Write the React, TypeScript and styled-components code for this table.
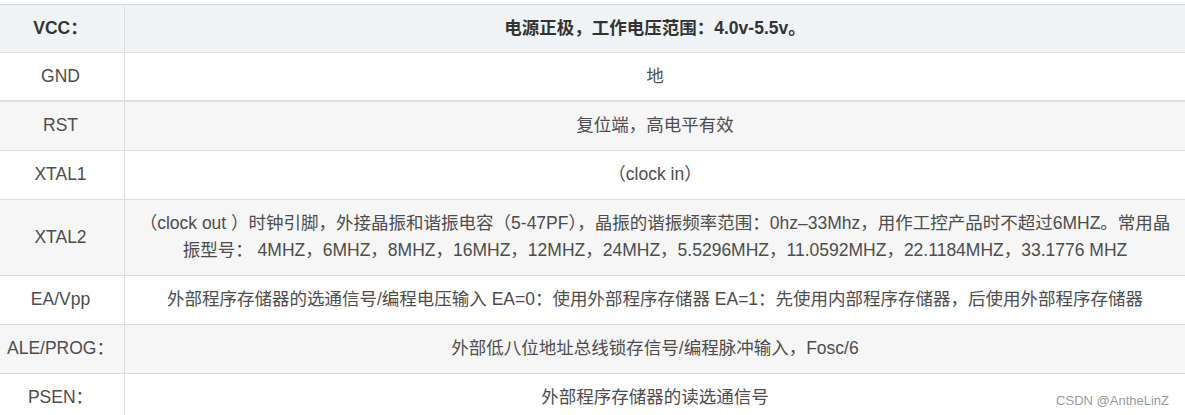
import React from "react";
import styled, { createGlobalStyle } from "styled-components";

const Global = createGlobalStyle`
  html, body { margin: 0; padding: 0; background: #ffffff; }
  body { font-family: "Liberation Sans", "Noto Sans CJK SC", sans-serif; overflow: hidden; }
`;

const Page = styled.div`
  position: relative;
  width: 1185px;
  height: 415px;
  overflow: hidden;
  padding-top: 4px;
  box-sizing: border-box;
`;

const Table = styled.table`
  border-collapse: collapse;
  margin-left: -4px;
  width: 1190px;
  table-layout: fixed;
  font-size: 17.5px;
  color: #4d4d4d;
`;

const HeadCell = styled.th<{ $first?: boolean }>`
  width: ${(p) => (p.$first ? "111px" : "auto")};
  background: #eff3f5;
  border: 1px solid #dddddd;
  height: 47px;
  padding: 0 8px;
  font-weight: bold;
  color: #333333;
  text-align: center;
  line-height: 27px;
`;

const Row = styled.tr<{ $alt?: boolean; $thick?: boolean }>`
  background: ${(p) => (p.$alt ? "#f6f6f6" : "#ffffff")};
  border-bottom: ${(p) => (p.$thick ? "2px" : "1px")} solid #dddddd;
`;

const Cell = styled.td<{ $tight?: boolean }>`
  border-left: 1px solid #dddddd;
  border-right: 1px solid #dddddd;
  padding: 10px 4px ${(p) => (p.$tight ? "10px" : "11px")};
  line-height: 27px;
  text-align: center;
  vertical-align: middle;
  white-space: nowrap;
`;

const Watermark = styled.div`
  position: absolute;
  right: 16px;
  bottom: 7px;
  font-size: 13px;
  color: #9a9a9a;
  font-family: "Liberation Sans", "Noto Sans CJK SC", sans-serif;
`;

const rows: { name: string; desc: React.ReactNode }[] = [
  { name: "GND", desc: "地" },
  { name: "RST", desc: "复位端，高电平有效" },
  { name: "XTAL1", desc: "（clock in）" },
  {
    name: "XTAL2",
    desc: (
      <>
        （clock out ）时钟引脚，外接晶振和谐振电容（5-47PF），晶振的谐振频率范围：0hz–33Mhz，用作工控产品时不超过6MHZ。常用晶
        <br />
        振型号： 4MHZ，6MHZ，8MHZ，16MHZ，12MHZ，24MHZ，5.5296MHZ，11.0592MHZ，22.1184MHZ，33.1776 MHZ
      </>
    ),
  },
  {
    name: "EA/Vpp",
    desc: "外部程序存储器的选通信号/编程电压输入 EA=0：使用外部程序存储器 EA=1：先使用内部程序存储器，后使用外部程序存储器",
  },
  { name: "ALE/PROG：", desc: "外部低八位地址总线锁存信号/编程脉冲输入，Fosc/6" },
  { name: "PSEN：", desc: "外部程序存储器的读选通信号" },
];

export default function App() {
  return (
    <>
      <Global />
      <Page>
        <Table>
          <thead>
            <tr>
              <HeadCell $first>VCC：</HeadCell>
              <HeadCell>电源正极，工作电压范围：4.0v-5.5v。</HeadCell>
            </tr>
          </thead>
          <tbody>
            {rows.map((r, i) => (
              <Row key={r.name} $alt={i % 2 === 1} $thick={i === 0}>
                <Cell $tight={i === 0}>{r.name}</Cell>
                <Cell $tight={i === 0}>{r.desc}</Cell>
              </Row>
            ))}
          </tbody>
        </Table>
        <Watermark>CSDN @AntheLinZ</Watermark>
      </Page>
    </>
  );
}
